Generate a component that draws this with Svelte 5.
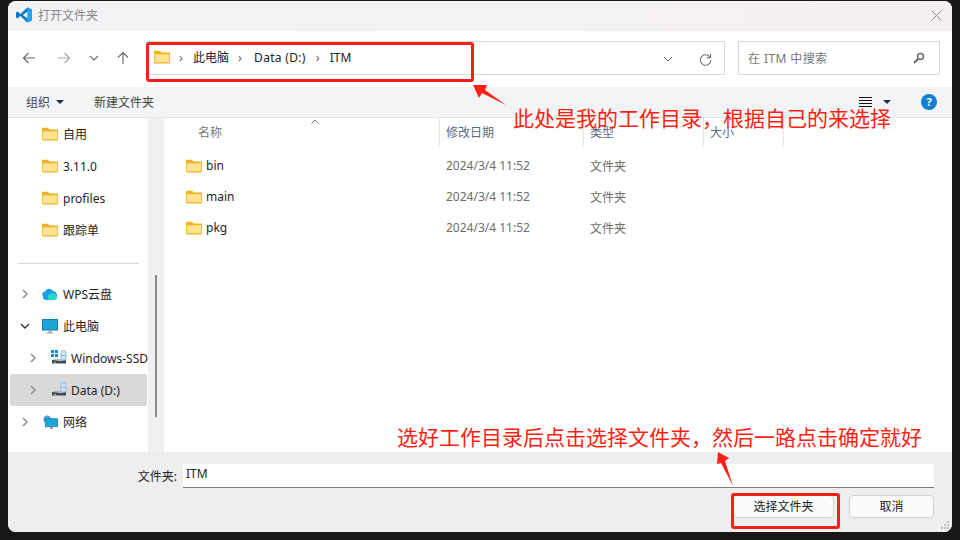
<script>
  const pinned = [
    { name: '自用' },
    { name: '3.11.0' },
    { name: 'profiles' },
    { name: '跟踪单' }
  ];
  const files = ['bin', 'main', 'pkg'];
</script>

{#snippet folder(cls)}
  <svg class={cls} viewBox="0 0 16 14">
    <path d="M0 2.2C0 1.3.6.7 1.4.7h4c.5 0 .8.2 1.2.6L7.6 2.4H16V4H0z" fill="#f5b30f"/>
    <path d="M0 3.4h14.6c.8 0 1.4.6 1.4 1.4v7.4c0 .8-.6 1.3-1.4 1.3H1.4C.6 13.5 0 13 0 12.2z" fill="#f0b429"/>
    <path d="M.8 4.2h14.4v8.1H.8z" fill="#ffe38f"/>
  </svg>
{/snippet}

{#snippet chevron(open)}
  <svg class="chev" viewBox="0 0 10 10">
    {#if open}
      <path d="M1 3l4 4 4-4" fill="none" stroke="#333" stroke-width="1.4"/>
    {:else}
      <path d="M3 1l4 4-4 4" fill="none" stroke="#8a8a8a" stroke-width="1.4"/>
    {/if}
  </svg>
{/snippet}

{#snippet drive(win)}
  <svg class="drive" viewBox="0 0 16 16">
    {#if win}
      <path d="M0 0h3v3H0zM4 0h3v3H4zM0 4h3v3H0zM4 4h3v3H4z" fill="#1787d8"/>
    {/if}
    <path d="M1 10l9-1 5 1v3.5H1z" fill="#3f4a52"/>
    <path d="M1 10l9-1 5 1-5 1z" fill="#c7ccd0"/>
    <rect x="3" y="12" width="2" height="1" fill="#5ce08a"/>
    <path d="M10 3a2.5 2.5 0 0 1 5 0v7h-5z" fill="#cfe2f3" stroke="#7fb2dc" stroke-width=".8"/>
    <path d="M10 5.5h5" stroke="#7fb2dc" stroke-width=".8"/>
  </svg>
{/snippet}

<div class="window">
  <header class="titlebar">
    <svg class="vscode" viewBox="0 0 16 16">
      <path d="M11.4.4L16 2.4v11.2l-4.6 2L4.4 9 1.5 11.4 0 10.6V5.4l1.5-.8L4.4 7z" fill="#0a78c4"/>
      <path d="M11.4.4L16 2.4v11.2l-4.6 2z" fill="#2aa3ef"/>
      <path d="M11.4 4.6L6.8 8l4.6 3.4z" fill="#f3f3f3"/>
    </svg>
    <span class="title">打开文件夹</span>
    <svg class="close" viewBox="0 0 11 11"><path d="M.5.5l10 10M10.5.5l-10 10" stroke="#8b8b8b" stroke-width="1" fill="none"/></svg>
  </header>

  <div class="navbar">
    <svg class="nav-icon" viewBox="0 0 14 14"><path d="M13 7H1.5M6.5 2l-5 5 5 5" fill="none" stroke="#6e6e6e" stroke-width="1.2"/></svg>
    <svg class="nav-icon fwd" viewBox="0 0 14 14"><path d="M1 7h11.5M7.5 2l5 5-5 5" fill="none" stroke="#a9a9a9" stroke-width="1.2"/></svg>
    <svg class="nav-down" viewBox="0 0 10 10"><path d="M1 3l4 4 4-4" fill="none" stroke="#6e6e6e" stroke-width="1.1"/></svg>
    <svg class="nav-icon up" viewBox="0 0 14 14"><path d="M7 13V1.5M2 6.5l5-5 5 5" fill="none" stroke="#6e6e6e" stroke-width="1.2"/></svg>
    <div class="address">
      {@render folder('addr-folder')}
      <span class="sep">›</span><span class="crumb">此电脑</span>
      <span class="sep">›</span><span class="crumb drive-crumb">Data (D:)</span>
      <span class="sep">›</span><span class="crumb">ITM</span>
      <svg class="addr-down" viewBox="0 0 10 10"><path d="M1 3l4 4 4-4" fill="none" stroke="#6e6e6e" stroke-width="1"/></svg>
      <svg class="refresh" viewBox="0 0 14 14"><path d="M11.6 4.2A5.6 5.6 0 1 0 12.7 7.6" fill="none" stroke="#7a7a7a" stroke-width="1.2"/><path d="M12.4 1v4H8.6" fill="none" stroke="#7a7a7a" stroke-width="1.2"/></svg>
    </div>
    <div class="search">
      <span class="search-text">在 ITM 中搜索</span>
      <svg class="magnifier" viewBox="0 0 12 12"><circle cx="7.5" cy="4.5" r="3" fill="none" stroke="#6b6b6b" stroke-width="1.5"/><path d="M5.2 6.8L1 11" stroke="#6b6b6b" stroke-width="2"/></svg>
    </div>
  </div>

  <div class="toolbar">
    <span class="tool">组织</span><span class="caret"></span>
    <span class="tool new">新建文件夹</span>
    <span class="spacer"></span>
    <svg class="view" viewBox="0 0 13 10"><path d="M0 .5h13M0 3.500h13M0 6.500h13M0 9.500h13" stroke="#111" stroke-width="1"/></svg>
    <span class="caret view-caret"></span>
    <span class="help">?</span>
  </div>

  <div class="body">
    <nav class="sidebar">
      <ul class="pins">
        {#each pinned as p}
          <li class="row pin">{@render folder('small-folder')}<span>{p.name}</span></li>
        {/each}
      </ul>
      <div class="divider"></div>
      <ul>
        <li class="row tree1">
          {@render chevron(false)}
          <svg class="tree-icon" viewBox="0 0 16 12"><path d="M1 8a3 3 0 0 1 2-5 4.5 4.5 0 0 1 8-.5A4.6 4.6 0 0 1 15 7a3.5 3.5 0 0 1-3 4.5H4A3 3 0 0 1 1 8z" fill="#1aa0e8"/><path d="M7 11.5A4 4 0 0 1 11 5c2.500 0 4 1.500 4 3a3.500 3.500 0 0 1-3 3.500z" fill="#2ad6c8"/></svg>
          <span>WPS云盘</span>
        </li>
        <li class="row tree1">
          {@render chevron(true)}
          <svg class="tree-icon" viewBox="0 0 16 15"><rect x=".5" y=".5" width="15" height="10.500" fill="#1fa5d8" stroke="#0e7fae"/><path d="M6.500 11h3v2.500h-3z" fill="#9aa7af"/><path d="M4.500 13.500h7v1h-7z" fill="#8d9aa2"/></svg>
          <span>此电脑</span>
        </li>
        <li class="row tree2">{@render chevron(false)}{@render drive(true)}<span class="clip">Windows-SSD</span></li>
        <li class="row tree2 selected">{@render chevron(false)}{@render drive(false)}<span>Data (D:)</span></li>
        <li class="row tree1">
          {@render chevron(false)}
          <svg class="tree-icon" viewBox="0 0 16 16"><circle cx="5" cy="4.500" r="4" fill="#5b9fd4"/><rect x="3" y="4" width="13" height="8.500" fill="#1fa5d8" stroke="#0e7fae" stroke-width=".8"/><path d="M8 12.500h3V15H8z" fill="#8d9aa2"/></svg>
          <span>网络</span>
        </li>
      </ul>
    </nav>

    <div class="scroll"><div class="thumb"></div></div>

    <main class="list">
      <div class="columns">
        <span class="col name">名称</span>
        <span class="col date">修改日期</span>
        <span class="col type">类型</span>
        <span class="col size">大小</span>
        <svg class="sort" viewBox="0 0 8 5"><path d="M.5 4.500L4 1l3.500 3.500" fill="none" stroke="#777"/></svg>
      </div>
      {#each files as f}
        <div class="file">
          <span class="file-name">{@render folder('small-folder')}<span>{f}</span></span>
          <span class="file-date">2024/3/4 11:52</span>
          <span class="file-type">文件夹</span>
        </div>
      {/each}
    </main>
  </div>

  <footer class="footer">
    <div class="field">
      <span class="field-label">文件夹:</span>
      <div class="input">ITM</div>
    </div>
    <div class="buttons">
      <span class="btn primary">选择文件夹</span>
      <span class="btn cancel">取消</span>
    </div>
    <svg class="grip" viewBox="0 0 8 8"><path d="M6 0h2v2H6zM3 3h2v2H3zM6 3h2v2H6zM0 6h2v2H0zM3 6h2v2H3zM6 6h2v2H6z" fill="#c4c4c4"/></svg>
  </footer>

  <!-- red annotations drawn on top of the screenshot -->
  <div class="mark mark-addr"></div>
  <div class="mark mark-btn"></div>
  <svg class="arrows" viewBox="0 0 944 531">
    <path d="M465 84L479 84 477 89 498 104 474 92 471 97z" fill="#fb1f14"/>
    <path d="M710 451L721 457 717 460 725 485 713 462 709 463z" fill="#fb1f14"/>
  </svg>
  <div class="note note-top">此处是我的工作目录，根据自己的来选择</div>
  <div class="note note-bottom">选好工作目录后点击选择文件夹，然后一路点击确定就好</div>
</div>

<style>
  :global(body) {
    margin: 0;
    background: #171717;
    font-family: "Noto Sans", "Noto Sans CJK SC", sans-serif;
  }

  ul {
    list-style: none;
    margin: 0;
    padding: 0;
  }

  .window {
    position: relative;
    width: 944px;
    height: 531px;
    margin: 1px 8px 0;
    display: flex;
    flex-direction: column;
    border-radius: 8px;
    overflow: hidden;
    background: #fff;
    font-size: 12px;
    color: #1a1a1a;
  }

  .titlebar {
    flex: 0 0 30px;
    box-sizing: border-box;
    display: flex;
    align-items: center;
    padding: 0 10px 2px 8px;
    background: linear-gradient(90deg, #f2f3f5, #f5f0ef);
  }

  .vscode {
    width: 16px;
    height: 16px;
    margin-right: 6px;
  }

  .title {
    color: #888;
    font-size: 12px;
  }

  .close {
    width: 11px;
    height: 11px;
    margin-left: auto;
  }

  .navbar {
    flex: 0 0 56px;
    display: flex;
    align-items: flex-start;
    padding-top: 10px;
    box-sizing: border-box;
    background: #fff;
  }

  .nav-icon {
    width: 14px;
    height: 14px;
    margin: 10px 0 0 14px;
    flex: none;
  }

  .fwd {
    margin-left: 21px;
  }

  .nav-down {
    width: 10px;
    height: 10px;
    margin: 12px 0 0 18px;
    flex: none;
  }

  .up {
    margin-left: 17px;
  }

  .address {
    flex: none;
    width: 580px;
    height: 34px;
    margin-left: 15px;
    box-sizing: border-box;
    border: 1px solid #d9d9d9;
    border-left: none;
    display: flex;
    align-items: center;
    padding: 0 0 2px 9px;
    color: #222;
  }

  .addr-folder {
    width: 16px;
    height: 14px;
    flex: none;
  }

  .sep {
    color: #666;
    margin: 0 10px 0 9px;
    font-size: 13px;
  }

  .drive-crumb {
    letter-spacing: .3px;
    margin-left: 2px;
    margin-right: 1px;
  }

  .addr-down {
    width: 10px;
    height: 10px;
    margin-left: auto;
    margin-top: 4px;
  }

  .refresh {
    width: 13px;
    height: 13px;
    margin: 5px 12px 0 26px;
  }

  .search {
    flex: none;
    width: 202px;
    height: 34px;
    margin-left: 13px;
    box-sizing: border-box;
    border: 1px solid #d9d9d9;
    display: flex;
    align-items: center;
    justify-content: space-between;
    padding: 0 14px 0 9px;
    color: #777;
  }

  .search-text {
    letter-spacing: .4px;
  }

  .magnifier {
    width: 12px;
    height: 12px;
  }

  .toolbar {
    flex: 0 0 31px;
    box-sizing: border-box;
    display: flex;
    align-items: center;
    padding: 0 15px 0 18px;
    background: #f3f4f6;
    border-bottom: 1px solid #e6e6e6;
  }

  .tool {
    color: #444;
  }

  .caret {
    width: 0;
    height: 0;
    margin-left: 6px;
    border: 4px solid transparent;
    border-top: 4px solid #1e2f4d;
    border-bottom: none;
  }

  .new {
    margin-left: 30px;
  }

  .spacer {
    flex: 1;
  }

  .view {
    width: 13px;
    height: 10px;
  }

  .view-caret {
    margin-left: 11px;
  }

  .help {
    width: 16px;
    height: 16px;
    margin-left: 30px;
    border-radius: 50%;
    background: #0f7fd2;
    color: #fff;
    font-size: 11px;
    font-weight: 700;
    line-height: 16px;
    text-align: center;
  }

  .body {
    flex: 1;
    min-height: 0;
    display: flex;
  }

  .sidebar {
    flex: 0 0 140px;
    padding-top: 0;
    overflow: hidden;
  }

  .row {
    height: 32px;
    display: flex;
    align-items: center;
    color: #1e1e1e;
    white-space: nowrap;
  }

  .pin {
    padding-left: 34px;
  }

  .small-folder {
    width: 16px;
    height: 14px;
    margin-right: 5px;
    flex: none;
  }

  .divider {
    height: 1px;
    margin: 17px 9px 14px 10px;
    background: #d6d6d6;
  }

  .chev {
    width: 10px;
    height: 10px;
    flex: none;
  }

  .tree1 {
    padding-left: 12px;
  }

  .tree1 .chev {
    margin-right: 12px;
  }

  .tree-icon {
    width: 16px;
    height: 15px;
    margin-right: 5px;
    flex: none;
  }

  .tree2 {
    padding-left: 20px;
  }

  .tree2 .chev {
    margin-right: 13px;
  }

  .drive {
    width: 16px;
    height: 16px;
    margin-right: 4px;
    flex: none;
  }

  .selected {
    margin: 0 1px 0 2px;
    padding-left: 18px;
    background: #d9d9d9;
    border-radius: 2px;
  }

  .clip {
    overflow: hidden;
  }

  .scroll {
    flex: 0 0 16px;
    background: #f0f0f0;
    margin-right: 0;
    padding-top: 157px;
    box-sizing: border-box;
  }

  .thumb {
    width: 2px;
    height: 142px;
    margin-left: 7px;
    background: #8a8a8a;
  }

  .list {
    flex: 1;
    position: relative;
  }

  .columns {
    position: relative;
    height: 29px;
    display: grid;
    grid-template-columns: 276px 144px 120px 80px;
    margin-bottom: 3px;
  }

  .col {
    box-sizing: border-box;
    height: 28px;
    padding: 5px 0 0 6px;
    color: #5a6c85;
    border-right: 1px solid #e5e5e5;
  }

  .name {
    padding-left: 34px;
    color: #777;
  }

  .sort {
    position: absolute;
    left: 147px;
    top: 1px;
    width: 8px;
    height: 5px;
  }

  .file {
    height: 31px;
    display: grid;
    grid-template-columns: 276px 144px 1fr;
    align-items: center;
    color: #6d6d6d;
  }

  .file-name {
    display: flex;
    align-items: center;
    padding-left: 22px;
    color: #1e1e1e;
  }

  .file-name .small-folder {
    margin-right: 4px;
  }

  .file-date,
  .file-type {
    padding-left: 6px;
  }

  .footer {
    flex: 0 0 80px;
    box-sizing: border-box;
    position: relative;
    background: #eeeeee;
    padding: 12px 18px 0 0;
  }

  .field {
    display: flex;
    align-items: center;
    justify-content: flex-end;
  }

  .field-label {
    margin-right: 6px;
    color: #222;
  }

  .input {
    width: 751px;
    height: 24px;
    box-sizing: border-box;
    padding-left: 3px;
    line-height: 20px;
    background: #fff;
    border-bottom: 1px solid #7a7a7a;
    color: #222;
  }

  .buttons {
    display: flex;
    justify-content: flex-end;
    gap: 15px;
    margin-top: 7px;
  }

  .btn {
    height: 23px;
    box-sizing: border-box;
    border: 1px solid #d2d2d2;
    border-radius: 4px;
    background: #fbfbfb;
    color: #222;
    text-align: center;
    line-height: 21px;
  }

  .primary {
    width: 101px;
  }

  .cancel {
    width: 85px;
  }

  .grip {
    position: absolute;
    right: 3px;
    bottom: 3px;
    width: 8px;
    height: 8px;
  }

  .mark {
    position: absolute;
    box-sizing: border-box;
    border: 3px solid #f5201a;
    border-radius: 3px;
  }

  .mark-addr {
    left: 138px;
    top: 41px;
    width: 328px;
    height: 40px;
  }

  .mark-btn {
    left: 723px;
    top: 492px;
    width: 109px;
    height: 36px;
  }

  .arrows {
    position: absolute;
    left: 0;
    top: 0;
    width: 944px;
    height: 531px;
    pointer-events: none;
  }

  .note {
    position: absolute;
    color: #fb1f14;
    font-size: 21px;
    line-height: 28px;
    white-space: nowrap;
  }

  .note-top {
    left: 505px;
    top: 103px;
  }

  .note-bottom {
    left: 389px;
    top: 422px;
  }
</style>
